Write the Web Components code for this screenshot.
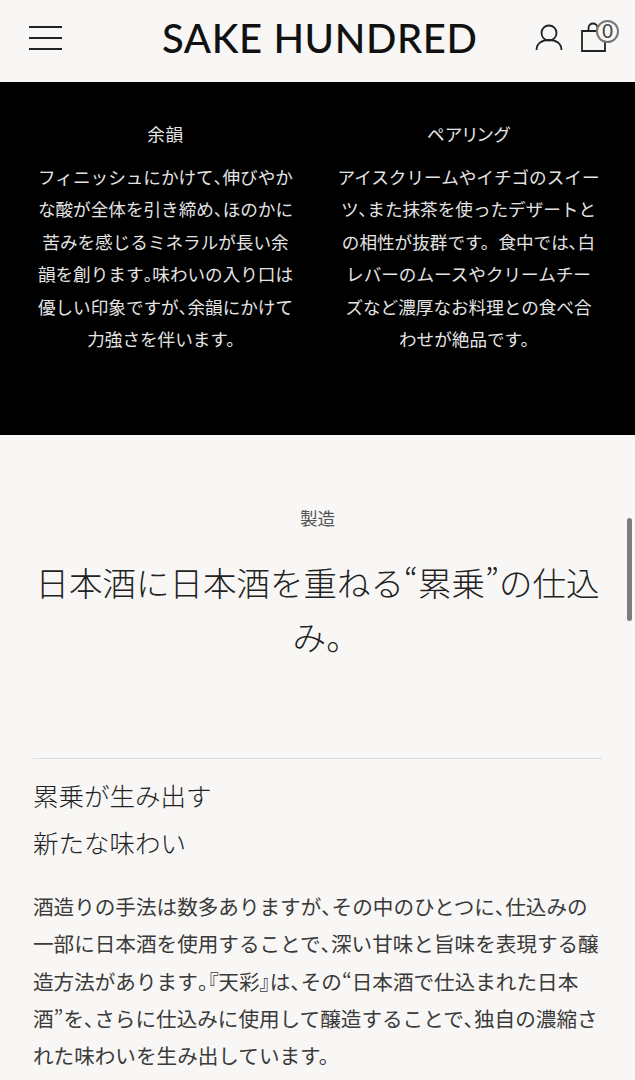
<!DOCTYPE html>
<html lang="ja">
<head>
<meta charset="utf-8">
<title>SAKE HUNDRED</title>
<style>
    html, body { margin: 0; padding: 0; background: #f8f7f5; }
    body { width: 635px; height: 1080px; overflow: hidden; position: relative; font-family: "Noto Sans CJK JP", sans-serif; font-weight: 400; }
    span.p { font-feature-settings: "palt"; }
</style>
</head>
<body>
<site-header></site-header>
<taste-notes>
    <note-column title="余韻">フィニッシュにかけて、伸びやか
な酸が全体を引き締め、ほのかに
苦みを感じるミネラルが長い余
韻を創ります。味わいの入り口は
優しい印象ですが、余韻にかけて
力強さを伴います。</note-column>
    <note-column title="ペアリング">アイスクリームやイチゴのスイー
ツ、また抹茶を使ったデザートと
の相性が抜群です。食中では、白
レバーのムースやクリームチー
ズなど濃厚なお料理との食べ合
わせが絶品です。</note-column>
</taste-notes>
<section-heading label="製造">日本酒に日本酒を重ねる“累乗”の仕込
み。</section-heading>
<story-block heading="累乗が生み出す&#10;新たな味わい">酒造りの手法は数多ありますが、その中のひとつに、仕込みの
一部に日本酒を使用することで、深い甘味と旨味を表現する醸
造方法があります。『天彩』は、その“日本酒で仕込まれた日本
酒”を、さらに仕込みに使用して醸造することで、独自の濃縮さ
れた味わいを生み出しています。</story-block>
<page-scrollbar></page-scrollbar>

<script>
// one div per line; only the punctuation goes proportional, kana and kanji stay full width.
// the 。 stays full width except in front of 味 and 『 and in the heading's last line, like the reference
function tightenPunctuation(el) {
    el.innerHTML = el.textContent.trim().split('\n').map(line =>
        '<div>' + line.replace(/[、『』“”]|。(?=[味『])|(?<=^み)。/g, '<span class="p">$&</span>') + '</div>'
    ).join('');
}

class SiteHeader extends HTMLElement {
    constructor() {
        super();
        this.attachShadow({ mode: 'open' });
    }

    connectedCallback() {
        this.shadowRoot.innerHTML = `
            <style>
                :host {
                    display: grid;
                    grid-template-columns: 133px auto 1fr;
                    align-items: center;
                    height: 82px;
                    padding: 0 16px 6px 29px;
                    box-sizing: border-box;
                    background: #f8f7f5;
                    color: #111;
                }
                .burger {
                    width: 33px;
                    display: flex;
                    flex-direction: column;
                    gap: 9px;
                }
                .burger span { display: block; height: 2px; background: #222; }
                .logo {
                    font-family: "Lato", "Liberation Sans", sans-serif;
                    font-size: 40px;
                    font-weight: 500;
                    letter-spacing: 0.6px;
                    line-height: 1;
                    white-space: nowrap;
                }
                .icons {
                    display: flex;
                    justify-content: flex-end;
                    align-items: flex-start;
                    align-self: start;
                    gap: 18px;
                    margin-top: 20px;
                }
                svg { display: block; }
                .user { margin-top: 4px; }
                .cart { position: relative; width: 38px; height: 32px; }
                .count {
                    position: absolute;
                    top: 0;
                    right: 0;
                    width: 23px;
                    height: 23px;
                    box-sizing: border-box;
                    border: 2px solid #777;
                    border-radius: 50%;
                    background: #f8f7f5;
                    font: 400 20px/19px "Liberation Sans", sans-serif;
                    text-align: center;
                    color: #444;
                }
            </style>
            <div class="burger"><span></span><span></span><span></span></div>
            <div class="logo">SAKE HUNDRED</div>
            <div class="icons">
                <svg class="user" width="28" height="27" viewBox="0 0 28 27" fill="none" stroke="#222" stroke-width="1.8">
                    <circle cx="14" cy="9" r="7.5"/>
                    <path d="M1.500 26c0-6.500 5.500-10 12.500-10s12.500 3.500 12.500 10"/>
                </svg>
                <div class="cart">
                    <svg width="38" height="32" viewBox="0 0 38 32" fill="none" stroke="#222" stroke-width="1.8">
                        <path d="M1 11h23v20H1z"/>
                        <path d="M7.500 11V8c0-6 9-6 9 0v3"/>
                    </svg>
                    <div class="count">0</div>
                </div>
            </div>
        `;
    }
}

class TasteNotes extends HTMLElement {
    constructor() {
        super();
        this.attachShadow({ mode: 'open' });
        this.shadowRoot.innerHTML = `
            <style>
                :host {
                    display: grid;
                    grid-template-columns: 1fr 1fr;
                    column-gap: 36px;
                    height: 353px;
                    padding: 34px 33px 0 32px;
                    box-sizing: border-box;
                    background: #000;
                    color: #e4e4e4;
                }
            </style>
            <slot></slot>
        `;
    }
}

class NoteColumn extends HTMLElement {
    constructor() {
        super();
        this.attachShadow({ mode: 'open' });
    }

    connectedCallback() {
        tightenPunctuation(this);
        this.shadowRoot.innerHTML = `
            <style>
                :host { display: block; text-align: center; }
                h3 { margin: 0 0 9px; font-size: 17.6px; font-weight: 400; line-height: 36px; font-feature-settings: "palt"; letter-spacing: 0.6px; }
                .body { font-size: 17.6px; line-height: 32.400px; white-space: nowrap; }
            </style>
            <h3>${this.getAttribute('title')}</h3>
            <div class="body"><slot></slot></div>
        `;
    }
}

class SectionHeading extends HTMLElement {
    constructor() {
        super();
        this.attachShadow({ mode: 'open' });
    }

    connectedCallback() {
        tightenPunctuation(this);
        this.shadowRoot.innerHTML = `
            <style>
                :host { display: block; padding: 67px 33px 0; text-align: center; color: #222; }
                .label { font-size: 17.6px; line-height: 32px; color: #555; }
                h2 { margin: 21px 0 0; font-size: 33.5px; font-weight: 300; line-height: 54px; white-space: nowrap; }
            </style>
            <div class="label">${this.getAttribute('label')}</div>
            <h2><slot></slot></h2>
        `;
    }
}

class StoryBlock extends HTMLElement {
    constructor() {
        super();
        this.attachShadow({ mode: 'open' });
    }

    connectedCallback() {
        tightenPunctuation(this);
        this.shadowRoot.innerHTML = `
            <style>
                :host { display: block; margin: 95px 33px 0; border-top: 1px solid #ddd; color: #3a3a3a; }
                h3 { margin: 12px 0 23px; font-size: 25.5px; font-weight: 300; line-height: 47px; white-space: pre-line; color: #222; }
                .body { font-size: 20.6px; line-height: 37.300px; white-space: nowrap; }
            </style>
            <h3>${this.getAttribute('heading')}</h3>
            <div class="body"><slot></slot></div>
        `;
    }
}

class PageScrollbar extends HTMLElement {
    constructor() {
        super();
        this.attachShadow({ mode: 'open' });
        this.shadowRoot.innerHTML = `
            <style>
                :host {
                    position: absolute;
                    top: 518px;
                    right: 3px;
                    width: 5px;
                    height: 103px;
                    border-radius: 3px;
                    background: #7d7d7d;
                }
            </style>
        `;
    }
}

customElements.define('site-header', SiteHeader);
customElements.define('taste-notes', TasteNotes);
customElements.define('note-column', NoteColumn);
customElements.define('section-heading', SectionHeading);
customElements.define('story-block', StoryBlock);
customElements.define('page-scrollbar', PageScrollbar);
</script>
</body>
</html>
